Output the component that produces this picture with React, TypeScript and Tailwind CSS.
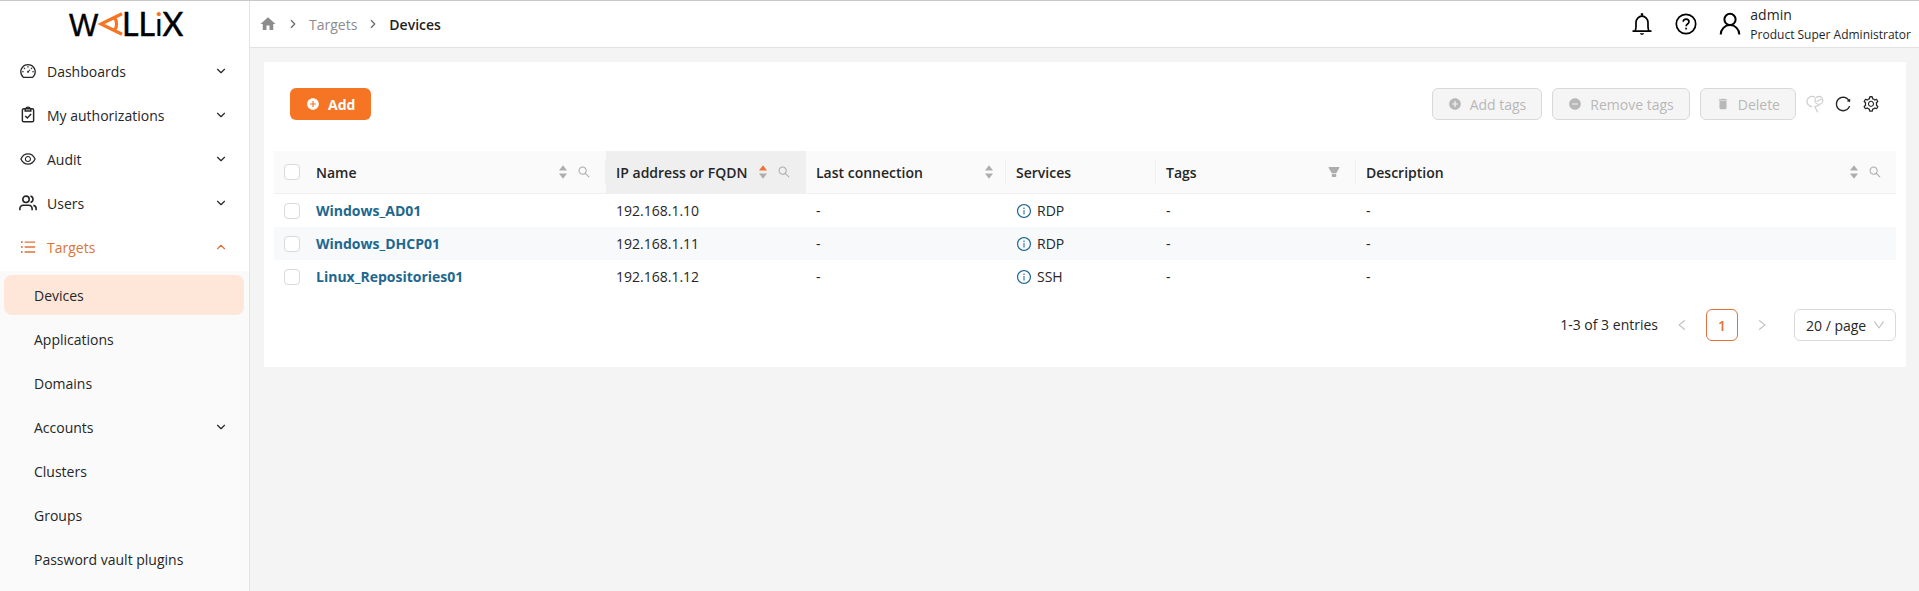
import type { ReactNode } from "react";
import {
  AiFillFilter,
  AiOutlineDashboard,
  AiOutlineDown,
  AiOutlineEye,
  AiOutlineInfoCircle,
  AiOutlineLeft,
  AiOutlineReload,
  AiOutlineRight,
  AiOutlineSearch,
  AiOutlineSetting,
  AiOutlineUnorderedList,
} from "react-icons/ai";
import { MdAddCircle, MdDelete, MdHome, MdRemoveCircle } from "react-icons/md";
import { FiChevronDown, FiChevronRight, FiChevronUp } from "react-icons/fi";

function Logo() {
  return (
    <svg
      className="h-[47px] w-[118px] overflow-visible"
      viewBox="0 0 118 47"
      role="img"
      aria-label="WALLIX"
      fontFamily="Lato, sans-serif"
      fontSize="32"
    >
      <defs>
        <linearGradient id="dot" x1="0" y1="0" x2="0" y2="47" gradientUnits="userSpaceOnUse">
          <stop offset="0.34" stopColor="#f57524" />
          <stop offset="0.34" stopColor="#000" />
        </linearGradient>
      </defs>
      <text x="3" y="35" fontFamily="'Liberation Sans', sans-serif" fontSize="31" stroke="#000" strokeWidth="0.4">W</text>
      <path
        d="M56 12.700 35 23 56 33.300M48.500 16.500c2.800 3.800 2.800 9.200 0 13"
        fill="none"
        stroke="#f57524"
        strokeWidth="3.200"
      />
      <text x="56" y="35" stroke="#000" strokeWidth="0.5">
        LL<tspan fill="url(#dot)" stroke="none">i</tspan>X
      </text>
    </svg>
  );
}

function ClipboardIcon() {
  return (
    <svg className="size-[18px]" viewBox="0 0 16 16" fill="none" stroke="currentColor" strokeWidth="1.300">
      <rect x="3" y="2.500" width="10" height="11.500" rx="1.200" />
      <path d="M5.500 2.500v2h5v-2M6.300 2.300a1.700 1.300 0 0 1 3.400 0M5.500 8.800l1.900 1.900 3.400-3.500" />
    </svg>
  );
}

function UsersIcon() {
  return (
    <svg className="h-4 w-[18px]" viewBox="0 0 18 16" fill="none" stroke="currentColor" strokeWidth="1.600">
      <circle cx="7" cy="4.300" r="3.200" />
      <path d="M.9 15.200v-1.700a3.200 3.200 0 0 1 3.200-3.200h5.800a3.200 3.200 0 0 1 3.200 3.200v1.700M11.500 1.100a3.300 3.300 0 0 1 0 6.400M14.300 10.400a3.200 3.200 0 0 1 2.800 3.100v1.700" />
    </svg>
  );
}

function BellIcon() {
  return (
    <svg className="size-6" viewBox="0 0 24 24" fill="none" stroke="currentColor" strokeWidth="1.700">
      <path d="M5 19c.8-1.200 1-2.500 1-4.500v-4a6 6.300 0 0 1 12 0v4c0 2 .2 3.300 1 4.500M2.500 19.200h19" />
      <path d="M10.800 3.700V1.200h2.400v2.500zM9.700 21.200h4.600l-1.300 1.600h-2z" fill="currentColor" stroke="none" />
    </svg>
  );
}

function HelpIcon() {
  return (
    <svg className="size-6" viewBox="0 0 24 24" fill="none" stroke="currentColor" strokeWidth="1.700">
      <circle cx="12" cy="12" r="9.700" />
      <path d="M9.200 9.800c0-3.700 5.800-3.500 5.800 0 0 2.200-2.900 2.200-2.900 4.400M12.100 15.700v1.900" />
    </svg>
  );
}

function UserIcon() {
  return (
    <svg className="size-6 text-black" viewBox="0 0 24 24" fill="none" stroke="currentColor" strokeWidth="2">
      <circle cx="12" cy="7.400" r="5.600" />
      <path d="M2.700 22.500a9.300 9.400 0 0 1 18.600 0" />
    </svg>
  );
}

function ClearSearchIcon() {
  return (
    <svg className="size-[18px]" viewBox="0 0 18 18" fill="none" stroke="currentColor" strokeWidth="1.300">
      <path d="M9 2.300A5.100 5.100 0 1 0 6.300 11.600M8.700 11l2.800 6.200M13.500 9.700c-1 1.300-2.500 1.700-4.600 1.700" />
      <circle cx="12.900" cy="5.400" r="3.900" />
      <path d="M10.400 6.800 15.400 4" />
    </svg>
  );
}

function Sorter({ active = false }: { active?: boolean }) {
  return (
    <button type="button" aria-label="Sort" className="flex">
      <svg className="h-[14px] w-2" viewBox="0 0 8 14">
        <path d="M4 .3 8 5.400H0z" fill={active ? "#ee7330" : "#adadad"} />
        <path d="M4 13.700 8 8.600H0z" fill="#adadad" />
      </svg>
    </button>
  );
}

function SearchButton() {
  return (
    <button type="button" aria-label="Search column" className="mx-[2px] text-[#adadad]">
      <AiOutlineSearch className="size-[14px]" />
    </button>
  );
}

type Item = { label: string; icon: ReactNode };

const menu: Item[] = [
  { label: "Dashboards", icon: <AiOutlineDashboard className="size-[18px]" /> },
  { label: "My authorizations", icon: <ClipboardIcon /> },
  { label: "Audit", icon: <AiOutlineEye className="size-[18px]" /> },
  { label: "Users", icon: <UsersIcon /> },
];

const targets = ["Devices", "Applications", "Domains", "Accounts", "Clusters", "Groups", "Password vault plugins"];

function Sidebar() {
  return (
    <aside className="flex w-[250px] shrink-0 flex-col border-r border-[#e3e3e3] bg-[#fafafa]">
      <div className="bg-white">
        <a href="#home" className="flex justify-center">
          <Logo />
        </a>
        <nav aria-label="Main" className="flex flex-col gap-1 pt-[3px] pb-1">
          {menu.map((m) => (
            <button key={m.label} type="button" className="flex h-10 items-center pr-[21px] pl-[19px] text-left">
              <span className="w-7 shrink-0">{m.icon}</span>
              <span className="grow pt-[2px]">{m.label}</span>
              <FiChevronDown className="size-[14px]" />
            </button>
          ))}
          <button type="button" aria-expanded="true" className="flex h-10 items-center pr-[21px] pl-[19px] text-left text-[#d9743a]">
            <span className="w-7 shrink-0">
              <AiOutlineUnorderedList className="size-[18px]" />
            </span>
            <span className="grow pt-[2px]">Targets</span>
            <FiChevronUp className="size-[14px]" />
          </button>
        </nav>
      </div>
      <nav aria-label="Targets" className="flex flex-col gap-1 pt-1 pr-[5px] pl-1">
        {targets.map((t) => (
          <a
            key={t}
            href="#section"
            className={`flex h-10 items-center justify-between rounded-lg pr-4 pl-[30px] ${t === "Devices" ? "bg-[#fee6d9]" : ""}`}
          >
            <span className="pt-[2px]">{t}</span>
            {t === "Accounts" && <FiChevronDown className="size-[14px]" />}
          </a>
        ))}
      </nav>
    </aside>
  );
}

function Header() {
  return (
    <header className="flex h-[47px] items-center justify-between border-b border-[#e3e3e3] bg-white pr-2 pl-[9px]">
      <nav aria-label="Breadcrumb" className="flex items-center text-[#8c8c8c]">
        <a href="#home" aria-label="Home">
          <MdHome className="size-[18px]" />
        </a>
        <FiChevronRight className="mx-[9px] size-[14px] text-[#666]" />
        <a href="#targets" className="pt-[2px]">Targets</a>
        <FiChevronRight className="mx-[9px] size-[14px] text-[#666]" />
        <span className="pt-[2px] font-semibold text-[#1f1f1f]">Devices</span>
      </nav>
      <div className="flex items-center text-black">
        <button type="button" aria-label="Notifications">
          <BellIcon />
        </button>
        <button type="button" aria-label="Help" className="ml-5">
          <HelpIcon />
        </button>
        <button type="button" className="ml-5 flex items-center gap-2 text-left text-[#1f1f1f]">
          <UserIcon />
          <span className="flex flex-col pt-[2px]">
            <span className="leading-5 font-medium">admin</span>
            <span className="text-xs leading-5">Product Super Administrator</span>
          </span>
        </button>
      </div>
    </header>
  );
}

function DisabledButton({ icon, children }: { icon: ReactNode; children: ReactNode }) {
  return (
    <button
      type="button"
      disabled
      className="flex h-8 items-center gap-2 rounded-md border border-[#d9d9d9] bg-[#f5f5f5] px-[15px] text-[#b8b8b8]"
    >
      {icon}
      <span className="pt-[2px]">{children}</span>
    </button>
  );
}

function HeadCell({ label, tools, sorted = false, last = false }: { label: string; tools?: ReactNode; sorted?: boolean; last?: boolean }) {
  return (
    <th scope="col" className={`h-[43px] border-b border-[#efefef] p-0 text-left font-semibold ${sorted ? "bg-[#efefef]" : ""}`}>
      <div className={`flex h-6 items-center justify-between pl-[10px] ${last ? "" : "border-r"} ${sorted ? "border-[#efefef]" : "border-[#f0f0f0]"}`}>
        <span className="pt-[2px] whitespace-nowrap">{label}</span>
        <span className="flex items-center gap-2 pr-3">{tools}</span>
      </div>
    </th>
  );
}

const devices = [
  { name: "Windows_AD01", ip: "192.168.1.10", service: "RDP" },
  { name: "Windows_DHCP01", ip: "192.168.1.11", service: "RDP" },
  { name: "Linux_Repositories01", ip: "192.168.1.12", service: "SSH" },
];

function Check({ label }: { label: string }) {
  return (
    <input
      type="checkbox"
      aria-label={label}
      className="ml-[10px] block size-4 appearance-none rounded border border-[#d9d9d9] bg-white checked:bg-[#f57524]"
    />
  );
}

function DevicesTable() {
  return (
    <table className="w-full table-fixed border-separate border-spacing-0">
      <colgroup>
        <col className="w-8" />
        <col className="w-[300px]" />
        <col className="w-[200px]" />
        <col className="w-[200px]" />
        <col className="w-[150px]" />
        <col className="w-[200px]" />
        <col />
      </colgroup>
      <thead className="bg-[#fafafa]">
        <tr>
          <th className="border-b border-[#efefef] p-0">
            <Check label="Select all" />
          </th>
          <HeadCell label="Name" tools={<><Sorter /><SearchButton /></>} />
          <HeadCell label="IP address or FQDN" sorted tools={<><Sorter active /><SearchButton /></>} />
          <HeadCell label="Last connection" tools={<Sorter />} />
          <HeadCell label="Services" />
          <HeadCell
            label="Tags"
            tools={
              <button type="button" aria-label="Filter tags" className="mx-[2px] text-[#adadad]">
                <AiFillFilter className="size-[14px]" />
              </button>
            }
          />
          <HeadCell label="Description" last tools={<><Sorter /><SearchButton /></>} />
        </tr>
      </thead>
      <tbody>
        {devices.map((d) => (
          <tr key={d.name} className="h-[33px] even:bg-[#f7f9fb]">
            <td className="p-0">
              <Check label={`Select ${d.name}`} />
            </td>
            <td className="px-[10px] py-0">
              <a href="#device" className="font-bold text-[#1e678f]">{d.name}</a>
            </td>
            <td className="px-[10px] py-0">{d.ip}</td>
            <td className="px-[10px] py-0">-</td>
            <td className="px-[10px] py-0">
              <span className="flex items-center gap-[5px]">
                <AiOutlineInfoCircle className="size-4 text-[#1e678f]" />
                {d.service}
              </span>
            </td>
            <td className="px-[10px] py-0">-</td>
            <td className="px-[10px] py-0">-</td>
          </tr>
        ))}
      </tbody>
    </table>
  );
}

function Pagination() {
  return (
    <nav aria-label="Pagination" className="flex h-8 items-center justify-end">
      <span>1-3 of 3 entries</span>
      <button type="button" disabled aria-label="Previous page" className="ml-2 flex size-8 items-center justify-center text-[#bfbfbf]">
        <AiOutlineLeft className="size-[14px]" />
      </button>
      <button type="button" className="mx-2 size-8 rounded-md border border-[#e0733a] pt-[2px] font-semibold text-[#e0733a]">
        1
      </button>
      <button type="button" disabled aria-label="Next page" className="flex size-8 items-center justify-center text-[#bfbfbf]">
        <AiOutlineRight className="size-[14px]" />
      </button>
      <span className="relative ml-4">
        <select
          aria-label="Page size"
          className="block h-8 w-[102px] appearance-none rounded-md border border-[#d9d9d9] bg-white pt-[2px] pl-[11px]"
        >
          <option>20 / page</option>
        </select>
        <AiOutlineDown className="pointer-events-none absolute top-[9px] right-[10px] size-[14px] text-[#bfbfbf]" />
      </span>
    </nav>
  );
}

export default function App() {
  return (
    <div className="flex h-screen overflow-hidden border-t border-[#c8c8c8] bg-[#f4f4f4] font-['Open_Sans','Noto_Sans',sans-serif] text-sm leading-[22px] text-[#262626]">
      <Sidebar />
      <div className="min-w-0 grow">
        <Header />
        <main className="mt-[14px] mr-[13px] ml-[14px] bg-white px-[10px] pt-[26px] pb-[26px]">
          <div className="flex items-center justify-between pr-4 pl-4">
            <button type="button" className="flex h-8 items-center gap-2 rounded-md bg-[#f57524] px-4 font-bold text-white">
              <MdAddCircle className="size-[14px]" />
              <span className="pt-[2px]">Add</span>
            </button>
            <div className="flex items-center gap-[10px]">
              <DisabledButton icon={<MdAddCircle className="size-[14px]" />}>Add tags</DisabledButton>
              <DisabledButton icon={<MdRemoveCircle className="size-[14px]" />}>Remove tags</DisabledButton>
              <DisabledButton icon={<MdDelete className="size-[14px]" />}>Delete</DisabledButton>
              <button type="button" disabled aria-label="Clear search" className="text-[#cfcfcf]">
                <ClearSearchIcon />
              </button>
              <button type="button" aria-label="Reload">
                <AiOutlineReload className="size-[18px]" />
              </button>
              <button type="button" aria-label="Settings">
                <AiOutlineSetting className="size-[18px]" />
              </button>
            </div>
          </div>
          <div className="pt-[31px] pb-4">
            <DevicesTable />
          </div>
          <Pagination />
        </main>
      </div>
    </div>
  );
}
